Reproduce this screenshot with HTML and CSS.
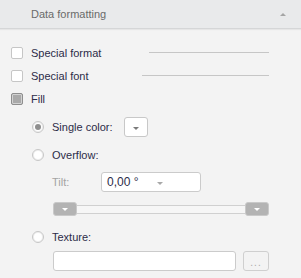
FILE: index.html
```html
<!DOCTYPE html>
<html lang="en">
<head>
    <meta charset="UTF-8">
    <meta name="viewport" content="width=device-width, initial-scale=1.0">
    <title>Data formatting</title>
    <link rel="stylesheet" href="styles.css">
</head>
<body>
    <div class="panel">
        <div class="panel-head">
            <span class="panel-title">Data formatting</span>
            <span class="head-caret"></span>
        </div>

        <div class="panel-body">
            <div class="check-row">
                <span class="checkbox"></span>
                <span class="check-label">Special format</span>
                <span class="rule rule-format"></span>
            </div>
            <div class="check-row">
                <span class="checkbox"></span>
                <span class="check-label">Special font</span>
                <span class="rule rule-font"></span>
            </div>
            <div class="check-row">
                <span class="checkbox checked"></span>
                <span class="check-label">Fill</span>
            </div>

            <div class="fill-options">
                <div class="radio-row">
                    <span class="radio checked"></span>
                    <span class="radio-label">Single color:</span>
                    <span class="color-btn"><span class="down-caret"></span></span>
                </div>
                <div class="radio-row">
                    <span class="radio"></span>
                    <span class="radio-label">Overflow:</span>
                </div>
                <div class="tilt-row">
                    <span class="tilt-label">Tilt:</span>
                    <span class="tilt-box">
                        <span class="tilt-value">0,00 °</span>
                        <span class="down-caret light"></span>
                    </span>
                </div>
                <div class="slider-row">
                    <span class="thumb"><span class="down-caret white"></span></span>
                    <span class="track"></span>
                    <span class="thumb"><span class="down-caret white"></span></span>
                </div>
                <div class="radio-row">
                    <span class="radio"></span>
                    <span class="radio-label">Texture:</span>
                </div>
                <div class="texture-row">
                    <span class="texture-box"></span>
                    <span class="browse-btn">...</span>
                </div>
            </div>
        </div>
    </div>
</body>
</html>
```

FILE: styles.css
```css
body {
    margin: 0;
    padding: 0;
    background-color: #f3f3f3;
    font-family: "Liberation Sans", Arial, sans-serif;
    font-size: 11px;
    color: #2c2c48;
}

.panel {
    width: 301px;
    height: 278px;
    background-color: #f3f3f3;
}

.panel-head {
    height: 28px;
    background-color: #e9eaeb;
    border-bottom: 1px solid #d5d6d7;
    box-shadow: 0 1px 1px #e6e6e6;
    display: flex;
    align-items: center;
    justify-content: space-between;
    padding: 0 15px 0 31px;
}

.panel-title {
    color: #6a6a6a;
    font-size: 11px;
}

.head-caret {
    width: 0;
    height: 0;
    border-left: 3px solid transparent;
    border-right: 3px solid transparent;
    border-bottom: 3px solid #a5a5a5;
    margin-top: 1px;
}

.panel-body {
    padding: 12px 32px 0 11px;
}

.check-row {
    height: 23px;
    display: flex;
    align-items: center;
}

.checkbox {
    width: 10px;
    height: 10px;
    border: 1px solid #c6c6c6;
    border-radius: 2px;
    background-color: #ffffff;
    margin-right: 8px;
    flex-shrink: 0;
}

.checkbox.checked {
    border-color: #8e8e8e;
    background-color: #a9a9a9;
    box-shadow: inset 0 0 0 1px #d2d2d2;
}

.rule {
    flex: 1;
    height: 1px;
    background-color: #c6c6c6;
}

.rule-format {
    margin-left: 48px;
}

.rule-font {
    margin-left: 54px;
}

.fill-options {
    padding: 3px 0 0 21px;
}

.radio-row {
    height: 28px;
    display: flex;
    align-items: center;
}

.radio {
    width: 10px;
    height: 10px;
    border: 1px solid #c6c6c6;
    border-radius: 50%;
    background-color: #ffffff;
    box-shadow: inset 0 0 0 1px #eeeeee;
    margin-right: 8px;
    flex-shrink: 0;
    display: flex;
    align-items: center;
    justify-content: center;
}

.radio.checked::after {
    content: "";
    width: 6px;
    height: 6px;
    border-radius: 50%;
    background-color: #8f8f8f;
}

.color-btn {
    width: 22px;
    height: 18px;
    border: 1px solid #c8c8c8;
    border-radius: 3px;
    background-color: #ffffff;
    margin-left: 11px;
    display: flex;
    align-items: center;
    justify-content: center;
}

.down-caret {
    width: 0;
    height: 0;
    border-left: 3px solid transparent;
    border-right: 3px solid transparent;
    border-top: 3px solid #7a7a7a;
    margin-top: 2px;
}

.down-caret.light {
    border-top-color: #a8a8a8;
}

.down-caret.white {
    border-top-color: #ffffff;
    margin-top: 1px;
}

.tilt-row {
    height: 26px;
    display: flex;
    align-items: center;
    padding-left: 20px;
}

.tilt-label {
    width: 49px;
    color: #a3a3a3;
}

.tilt-box {
    width: 89px;
    height: 18px;
    border: 1px solid #cbcbcb;
    border-radius: 3px;
    background-color: #ffffff;
    display: flex;
    align-items: center;
    justify-content: space-between;
    padding: 0 37px 0 5px;
    box-sizing: content-box;
    width: 56px;
    font-size: 12px;
}

.slider-row {
    height: 28px;
    display: flex;
    align-items: center;
    padding-left: 21px;
}

.thumb {
    width: 22px;
    height: 12px;
    border: 1px solid #c9c9c9;
    border-radius: 3px;
    background-color: #b3b3b3;
    display: flex;
    align-items: center;
    justify-content: center;
    flex-shrink: 0;
}

.track {
    flex: 1;
    height: 7px;
    border-top: 1px solid #d0d0d0;
    border-bottom: 1px solid #d0d0d0;
    background-color: #f6f6f6;
}

.texture-row {
    display: flex;
    align-items: center;
    gap: 7px;
    padding-left: 21px;
}

.texture-box {
    flex: 1;
    height: 18px;
    border: 1px solid #cbcbcb;
    border-radius: 3px;
    background-color: #ffffff;
}

.browse-btn {
    width: 24px;
    height: 18px;
    border: 1px solid #cfcfcf;
    border-radius: 3px;
    color: #aaaaaa;
    font-size: 10px;
    letter-spacing: 1px;
    display: flex;
    align-items: flex-end;
    justify-content: center;
    line-height: 14px;
}
```
